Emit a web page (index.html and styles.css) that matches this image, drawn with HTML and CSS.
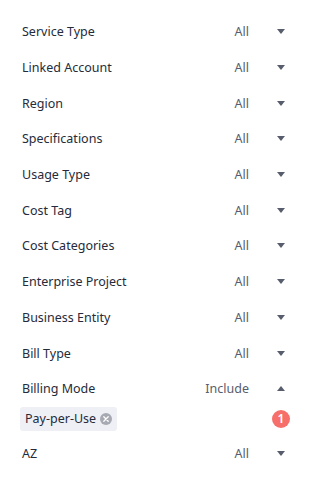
FILE: index.html
```html
<!DOCTYPE html>
<html lang="en">
<head>
    <meta charset="UTF-8">
    <meta name="viewport" content="width=device-width, initial-scale=1.0">
    <title>Filters</title>
    <link rel="stylesheet" href="styles.css">
</head>
<body>
    <div class="filter-panel">
        <div class="filter-row"><span class="label">Service Type</span><span class="value">All</span><span class="arrow"></span></div>
        <div class="filter-row"><span class="label">Linked Account</span><span class="value">All</span><span class="arrow"></span></div>
        <div class="filter-row"><span class="label">Region</span><span class="value">All</span><span class="arrow"></span></div>
        <div class="filter-row"><span class="label">Specifications</span><span class="value">All</span><span class="arrow"></span></div>
        <div class="filter-row"><span class="label">Usage Type</span><span class="value">All</span><span class="arrow"></span></div>
        <div class="filter-row"><span class="label">Cost Tag</span><span class="value">All</span><span class="arrow"></span></div>
        <div class="filter-row"><span class="label">Cost Categories</span><span class="value">All</span><span class="arrow"></span></div>
        <div class="filter-row"><span class="label">Enterprise Project</span><span class="value">All</span><span class="arrow"></span></div>
        <div class="filter-row"><span class="label">Business Entity</span><span class="value">All</span><span class="arrow"></span></div>
        <div class="filter-row"><span class="label">Bill Type</span><span class="value">All</span><span class="arrow"></span></div>
        <div class="filter-row"><span class="label">Billing Mode</span><span class="value">Include</span><span class="arrow up"></span></div>
        <div class="tag-row">
            <span class="tag">Pay-per-Use
                <svg class="tag-close" width="12" height="12" viewBox="0 0 12 12">
                    <circle cx="6" cy="6" r="6" fill="#a7aab3"/>
                    <path d="M3.8 3.8 L8.2 8.2 M8.2 3.8 L3.8 8.2" stroke="#fff" stroke-width="1.3" stroke-linecap="round"/>
                </svg>
            </span>
            <span class="badge">1</span>
        </div>
        <div class="filter-row"><span class="label">AZ</span><span class="value">All</span><span class="arrow"></span></div>
    </div>
</body>
</html>
```

FILE: styles.css
```css
* {
    margin: 0;
    padding: 0;
    box-sizing: border-box;
}

body {
    background: #fff;
    font-family: 'Noto Sans', 'Open Sans', Arial, sans-serif;
    font-size: 12.5px;
    color: #252b3a;
}

.filter-panel {
    padding: 14px 38px 0 22px;
}

.filter-row {
    display: flex;
    align-items: center;
    height: 35.7px;
}

.label {
    flex: 1;
}

.value {
    color: #575d6c;
}

.arrow {
    width: 0;
    height: 0;
    margin-left: 28px;
    border-left: 4px solid transparent;
    border-right: 4px solid transparent;
    border-top: 5px solid #575d6c;
}

.arrow.up {
    border-top: none;
    border-bottom: 5px solid #575d6c;
}

.tag-row {
    display: flex;
    align-items: center;
    justify-content: space-between;
    margin: 0 0 5px -2px;
}

.tag {
    display: inline-flex;
    align-items: center;
    gap: 4px;
    height: 24px;
    padding: 0 5px;
    background: #eef0f5;
    border-radius: 3px;
}

.badge {
    display: flex;
    align-items: center;
    justify-content: center;
    width: 18px;
    height: 18px;
    margin-right: -5px;
    border-radius: 50%;
    background: #f66f6a;
    color: #fff;
    font-size: 12px;
    font-weight: 600;
}
```
